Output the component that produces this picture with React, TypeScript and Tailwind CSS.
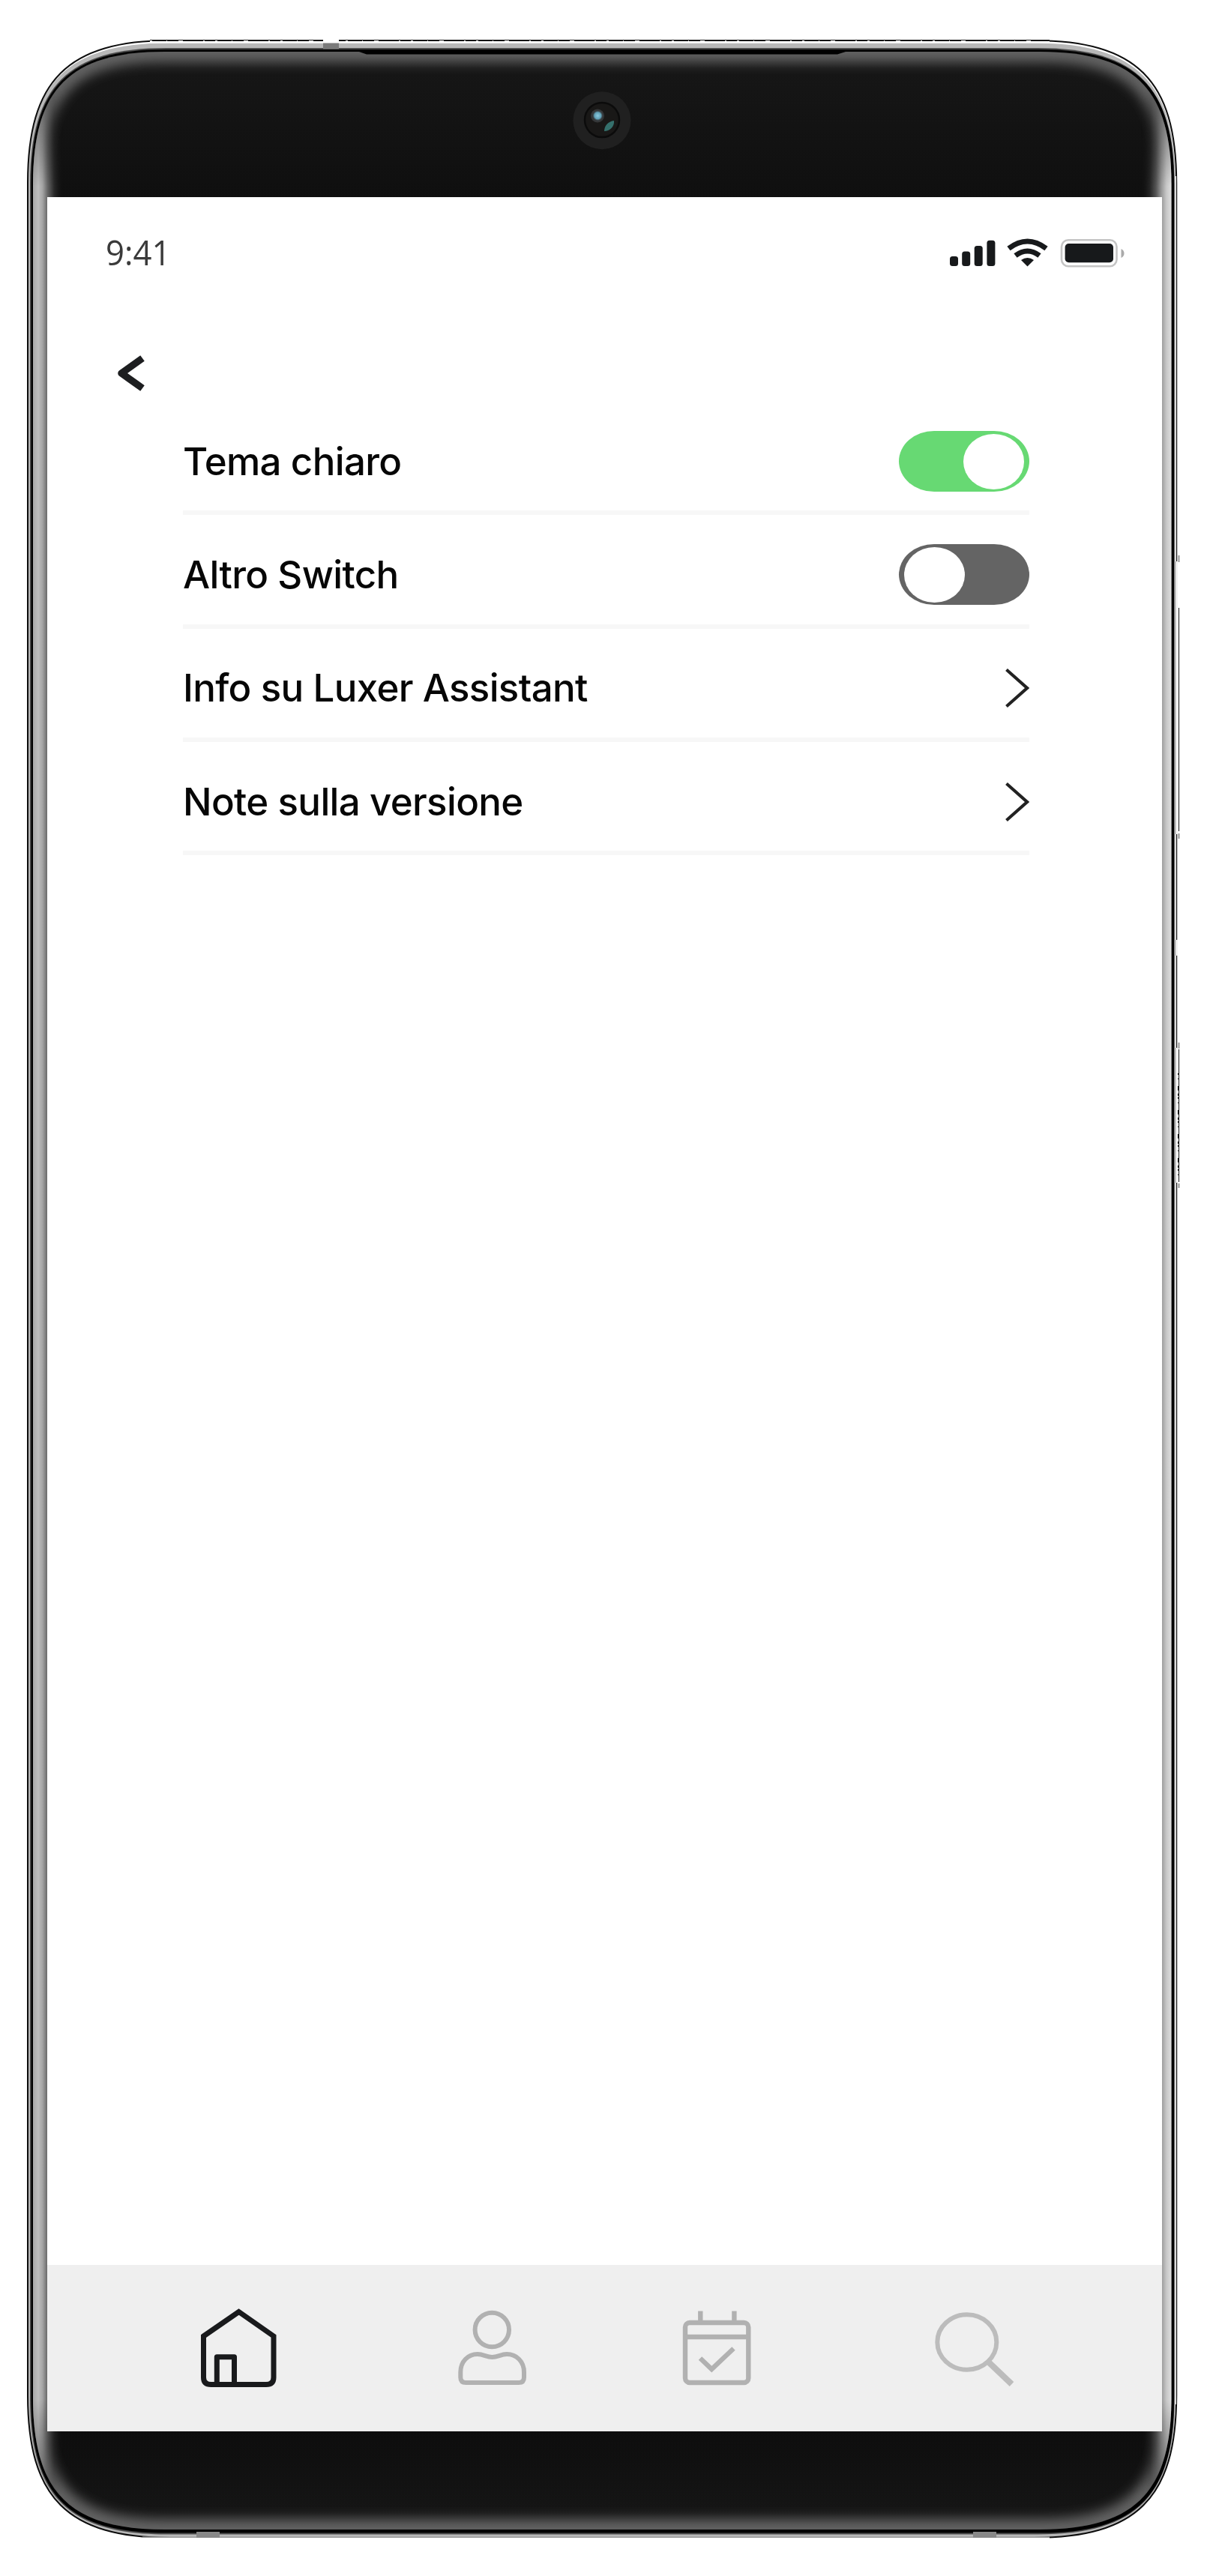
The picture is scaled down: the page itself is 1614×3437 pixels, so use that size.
import React from "react";

const L = 36, T = 53, R = 1570, B = 3387;

// Continuous-curvature rounded rectangle
function shell(x0: number, y0: number, x1: number, y1: number, e: number, k = 0.28) {
  const c = e * k;
  return `M${x0} ${y0 + e}C${x0} ${y0 + c} ${x0 + c} ${y0} ${x0 + e} ${y0}H${x1 - e}C${x1 - c} ${y0} ${x1} ${y0 + c} ${x1} ${y0 + e}V${y1 - e}C${x1} ${y1 - c} ${x1 - c} ${y1} ${x1 - e} ${y1}H${x0 + e}C${x0 + c} ${y1} ${x0} ${y1 - c} ${x0} ${y1 - e}Z`;
}

const glass = shell(44, 69, 1562.5, 3375, 176);

function PhoneBody() {
  return (
    <svg className="absolute left-0 top-0 h-full w-full" viewBox="0 0 1614 3437" fill="none" aria-hidden="true">
      <defs>
        <clipPath id="glass"><path d={glass} /></clipPath>
        <filter id="soft" x="-5%" y="-5%" width="110%" height="110%"><feGaussianBlur stdDeviation="8" /></filter>
        <linearGradient id="bands" x1="0" x2="0" y1="69" y2="3375" gradientUnits="userSpaceOnUse">
          <stop offset="0" stopColor="#171717" /><stop offset=".06" stopColor="#0f0f0f" />
          <stop offset=".96" stopColor="#0d0d0d" /><stop offset="1" stopColor="#171717" />
        </linearGradient>
        <linearGradient id="left" x1="44" x2="84" y1="0" y2="0" gradientUnits="userSpaceOnUse">
          <stop offset="0" stopColor="#a8a8a8" /><stop offset=".18" stopColor="#bdbdbd" /><stop offset=".32" stopColor="#a4a4a4" />
          <stop offset=".48" stopColor="#686868" /><stop offset=".7" stopColor="#2a2a2a" /><stop offset="1" stopColor="#141414" stopOpacity="0" />
        </linearGradient>
        <linearGradient id="right" x1="1562" x2="1522" y1="0" y2="0" gradientUnits="userSpaceOnUse">
          <stop offset="0" stopColor="#dcdcdc" /><stop offset=".15" stopColor="#c8c8c8" /><stop offset=".32" stopColor="#989898" />
          <stop offset=".5" stopColor="#555555" /><stop offset=".7" stopColor="#262626" /><stop offset="1" stopColor="#141414" stopOpacity="0" />
        </linearGradient>
        <linearGradient id="fade" x1="0" x2="0" y1="120" y2="3330" gradientUnits="userSpaceOnUse">
          <stop offset="0" stopColor="#000" /><stop offset=".04" stopColor="#fff" /><stop offset=".96" stopColor="#fff" /><stop offset="1" stopColor="#000" />
        </linearGradient>
        <mask id="sides" maskUnits="userSpaceOnUse" x="0" y="0" width="1614" height="3437"><rect width="1614" height="3437" fill="url(#fade)" /></mask>
        <radialGradient id="lens"><stop offset="0" stopColor="#8ccbe0" /><stop offset=".65" stopColor="#5f9fb5" /><stop offset="1" stopColor="#3c4d55" stopOpacity="0" /></radialGradient>
      </defs>
      <path d={shell(L + 1, T + 4.5, R - 2, B - 1, 188)} fill="#b8b8b8" />
      <path d={shell(L + 1, T + 1, R - 0.8, B - 1, 190)} stroke="#0d0d0d" strokeWidth="2" />
      <path d="M200 52.5H1400V57.5H200Z" fill="#fff" />
      <path d="M200 54H1400" stroke="#111" strokeWidth="2" />
      <path d="M200 54.5H1400" stroke="#fff" strokeWidth="1" strokeDasharray="3 19 1 15 6 27 2 14" />
      <path d="M190 3385H1400V3388H190Z" fill="#fff" />
      <path d="M190 3385.3H1400" stroke="#999" strokeWidth="1.4" />
      <path d={shell(40, 64, 1566.5, 3381.5, 182)} fill="#4c4c4c" />
      <path d={shell(41.5, 66, 1566, 3379.5, 179)} fill="#000" />
      <path d={glass} fill="url(#bands)" />
      <g clipPath="url(#glass)">
        <path d={glass} stroke="#646464" strokeWidth="28" filter="url(#soft)" />
        <g mask="url(#sides)">
          <path d="M44 69H84V3375H44Z" fill="url(#left)" />
          <path d="M1522 69H1563V3375H1522Z" fill="url(#right)" />
        </g>
        <path d="M479 69L489 72.5H1117L1128 69Z" fill="#000" />
      </g>
      <path d="M431 52H452V57.5H431Z" fill="#fff" />
      <path d="M431 57.5H452V65.5H431Z" fill="#7a7a7a" />
      <path d="M262 3378H293V3386H262ZM1298 3378H1329V3386H1298Z" fill="#888" />
      <path d="M1568.5 235V749M1568.5 1113V1254M1568.5 1275V1398M1568.5 1578V3208" stroke="#fff" strokeWidth="1" />
      <path d="M1569.5 749V1113M1569.5 1254V1275M1569.5 1398V1578" stroke="#fff" strokeWidth="2.4" />
      <path d="M1572.5 811V1109M1572.5 1400V1577" stroke="#111" strokeWidth="1" />
      <path d="M1571.5 1432V1572" stroke="#111" strokeWidth="1" strokeDasharray="2 5 1 9 6 4 3 2" />
      <path d="M1572.5 741V750M1572.5 1112V1119M1572.5 1391V1399M1572.5 1579V1585" stroke="#999" strokeWidth="2" />
      <circle cx="803" cy="160.7" r="38.5" fill="#202020" />
      <circle cx="803" cy="160" r="23" fill="#191817" stroke="#0b0b0b" strokeWidth="2.5" />
      <circle cx="797" cy="154.5" r="9" fill="#474c50" opacity=".6" />
      <circle cx="797.3" cy="154.3" r="7" fill="url(#lens)" />
      <path d="M819 161C820 169 813 175 806 175C806 168 811 162 819 161Z" fill="#35706c" />
    </svg>
  );
}

function StatusIcons() {
  return (
    <svg className="h-[40px] w-[236px]" viewBox="1265 316 236 40" fill="#17191b">
      <rect x="1267" y="341" width="11" height="13" rx="3.5" />
      <rect x="1283.2" y="334.5" width="11" height="19.5" rx="3.5" />
      <rect x="1299.7" y="327" width="11" height="27" rx="3.5" />
      <rect x="1316.4" y="319.7" width="11" height="34.3" rx="3.5" />
      <g fill="none" stroke="#17191b" strokeWidth="7">
        <path d="M1345.5 330.5Q1370.5 311.5 1395.5 330.5" />
        <path d="M1354.5 340Q1370.5 328 1386.5 340" />
      </g>
      <path d="M1362 346Q1370.5 340 1379 346L1370.5 354.5Z" />
      <rect x="1416" y="319.2" width="73.5" height="35" rx="9" fill="none" stroke="#c4c4c4" strokeWidth="2.6" />
      <rect x="1420.6" y="324" width="64.4" height="25.2" rx="5" />
      <path d="M1495.5 331Q1499.5 333 1499.5 337T1495.5 343Z" fill="#aaa" />
    </svg>
  );
}

function Toggle({ on }: { on: boolean }) {
  return (
    <span
      role="switch"
      aria-checked={on}
      className={`mb-[1px] flex h-[81px] w-[174px] items-center rounded-[47px/40.5px] px-[7px] ${on ? "justify-end bg-[#67d973]" : "justify-start bg-[#646464]"}`}
    >
      <span className="h-[74px] w-[81px] rounded-[50%] bg-white" />
    </span>
  );
}

function Chevron() {
  return (
    <svg className="mb-[1px] h-[54px] w-[33px]" viewBox="0 0 33 54" fill="none" stroke="#222" strokeWidth="4.2">
      <path d="M2.5 2.5L30 27L2.5 51.5" />
    </svg>
  );
}

function Row({ label, children }: { label: string; children: React.ReactNode }) {
  return (
    <div className="flex h-[151.3px] items-center justify-between border-b-[6px] border-[#f7f7f7] pt-[15px]">
      <span className="mb-[2px] whitespace-nowrap text-[51px] font-medium leading-none tracking-[-0.65px] text-[#060606]">{label}</span>
      {children}
    </div>
  );
}

export default function App() {
  return (
    <div className="relative h-[3437px] w-[1614px] overflow-hidden bg-white font-['Inter',sans-serif]">
      <PhoneBody />
      <div className="relative ml-[63px] flex h-[3244px] w-[1487px] flex-col pt-[263px]">
        <main className="flex flex-1 flex-col bg-white">
          <header className="flex h-[148px] items-center justify-between pl-[78px] pr-[49px]">
            <span className="mb-[3px] origin-left scale-x-[0.95] text-[46px] leading-none text-[#3a3a3a] font-['Open_Sans',sans-serif]">9:41</span>
            <StatusIcons />
          </header>
          <button className="ml-[92px] mt-[63px] h-[48px] w-[40px]" aria-label="Indietro">
            <svg className="h-[48px] w-[40px]" viewBox="0 0 40 48" fill="none" stroke="#1d1e20" strokeWidth="9.5" strokeLinejoin="round">
              <path d="M35 4L7 24L35 44" />
            </svg>
          </button>
          <section className="ml-[181px] mt-[14px] w-[1129px]">
            <Row label="Tema chiaro"><Toggle on /></Row>
            <Row label="Altro Switch"><Toggle on={false} /></Row>
            <Row label="Info su Luxer Assistant"><Chevron /></Row>
            <Row label="Note sulla versione"><Chevron /></Row>
          </section>
        </main>
        <nav className="flex h-[222px] items-start bg-[#efefef] pl-[202px] pt-[56px]">
          <svg className="h-[110px] w-[106px]" viewBox="265 3078 106 110" fill="none" stroke="#191a1c" strokeWidth="7">
            <path d="M271.5 3117L318.5 3084.5L365 3117V3172Q365 3181.5 355 3181.5H281.5Q271.5 3181.5 271.5 3172Z" />
            <path d="M289.3 3183V3144.8H312.5V3183" strokeLinejoin="round" />
          </svg>
          <svg className="ml-[237px] h-[110px] w-[98px]" viewBox="608 3078 98 110" fill="none" stroke="#b1b1b1" strokeWidth="6">
            <circle cx="656.3" cy="3108.5" r="22.7" />
            <path d="M614.3 3165C614.3 3151 624 3141 637 3141C645 3141 649 3145 656.5 3145S668 3141 676 3141C689 3141 699 3151 699 3165V3172Q699 3179 692 3179H621.5Q614.3 3179 614.3 3172Z" />
          </svg>
          <svg className="ml-[202px] h-[110px] w-[98px]" viewBox="908 3078 98 110" fill="none" stroke="#b1b1b1" strokeWidth="6.4">
            <rect x="914" y="3099" width="84.3" height="80" rx="6" />
            <path d="M914 3118H998M934.3 3083.5V3099M979.4 3083.5V3099" />
            <path d="M934 3146.5L949.3 3161L978.5 3133.5" />
          </svg>
          <svg className="ml-[239px] h-[110px] w-[110px]" viewBox="1245 3078 110 110" fill="none" stroke="#bcbcbc" strokeWidth="6">
            <ellipse cx="1289.8" cy="3125" rx="39.5" ry="36.7" />
            <path d="M1318 3151L1349.5 3181" strokeWidth="8" />
          </svg>
        </nav>
      </div>
    </div>
  );
}
